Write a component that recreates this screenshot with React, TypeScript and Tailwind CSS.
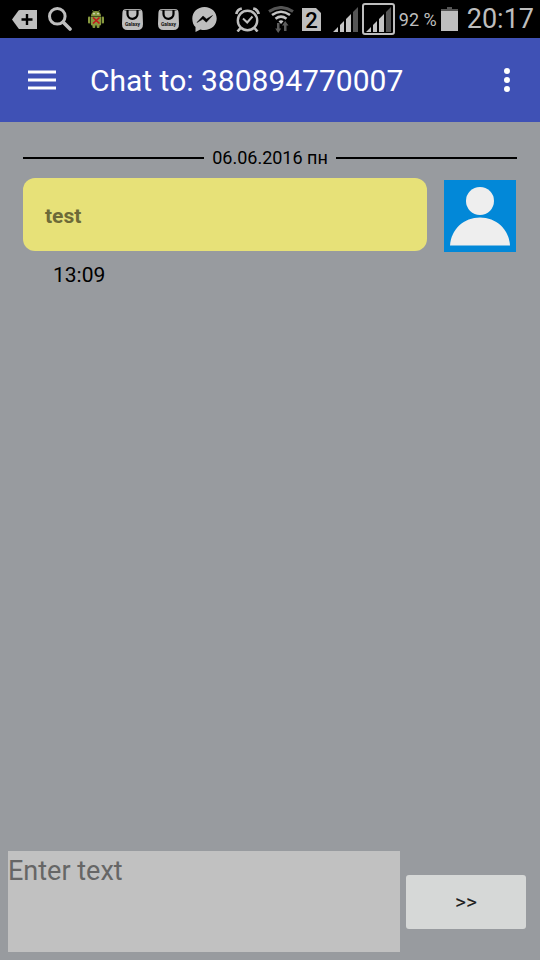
import type { ReactNode } from "react";

const FONT = "font-['Roboto','Noto_Sans',sans-serif]";

function Slot({ children }: { children: ReactNode }) {
  return <span className="flex w-9 shrink-0 justify-center">{children}</span>;
}

function TagPlusIcon() {
  return (
    <svg width="25" height="19" viewBox="0 0 25 19" aria-hidden="true">
      <path d="M0 9.5 6.5 0.5Q7 0 8 0H25V19H8Q7 19 6.5 18.5Z" fill="#bebebe" />
      <path d="M15 4v11M9.500 9.500h11" stroke="#000" strokeWidth="2.4" />
    </svg>
  );
}

function SearchIcon() {
  return (
    <svg width="24" height="24" viewBox="0 0 24 24" fill="none" stroke="#bebebe" aria-hidden="true">
      <circle cx="9.3" cy="9.3" r="7.8" strokeWidth="3" />
      <path d="m15.5 15.5 6.5 6.5" strokeWidth="3.6" strokeLinecap="round" />
    </svg>
  );
}

function DroidIcon() {
  return (
    <svg width="16" height="18" viewBox="0 0 16 18" aria-hidden="true">
      <g fill="#87993f">
        <path d="M3 6a5 5 0 0 1 10 0z" />
        <path d="M2.800 6.500h10.400V14a1.500 1.500 0 0 1-1.500 1.500H4.300A1.500 1.500 0 0 1 2.800 14z" />
        <rect x="0" y="6.500" width="2.200" height="7" rx="1" />
        <rect x="13.800" y="6.500" width="2.200" height="7" rx="1" />
        <rect x="4.500" y="13" width="2.800" height="5" rx="1" />
        <rect x="8.700" y="13" width="2.800" height="5" rx="1" />
      </g>
      <path d="m4.500 0 1 2M11.500 0l-1 2" stroke="#87993f" strokeWidth="0.800" />
      <circle cx="6" cy="3.800" r="0.800" fill="#eee" />
      <circle cx="10" cy="3.800" r="0.800" fill="#eee" />
      <path d="m5 7.500 6.500 6M11.500 7.500 5 13.500" stroke="#c4161c" strokeWidth="1.700" />
    </svg>
  );
}

function GalaxyBagIcon() {
  return (
    <svg width="21" height="21" viewBox="0 0 21 21" aria-hidden="true">
      <path d="M4 0H17Q20.500 0 20.600 4L21 15Q21 21 15.500 21H5.500Q0 21 0 15L0.400 4Q0.500 0 4 0Z" fill="#bebebe" />
      <path d="M2.500 1.300H18.500" stroke="#222" strokeWidth="0.700" />
      <path d="M5.500 1V5a5 4.800 0 0 0 10 0V1" fill="none" stroke="#000" strokeWidth="2.200" />
      <text x="10.500" y="17" textAnchor="middle" fontSize="5" fontWeight="700" fill="#111" fontFamily="Roboto">
        Galaxy
      </text>
    </svg>
  );
}

function MessengerIcon() {
  return (
    <svg width="25" height="25" viewBox="0 0 25 25" aria-hidden="true">
      <path
        d="M12.500 0C5.500 0 .3 5 .3 11.500c0 3.700 1.100 6.500 3.200 8.600V25l4.800-2.500c1.300.4 2.800.5 4.200.5 7 0 12.200-5 12.200-11.500S19.500 0 12.500 0z"
        fill="#bebebe"
      />
      <path d="m5 15.500 6-6.500 3.500 3 6-3.500-6.200 6.700-3.500-3.100z" fill="#000" stroke="#000" strokeWidth="0.500" />
    </svg>
  );
}

function AlarmIcon() {
  return (
    <svg width="25" height="25" viewBox="0 0 25 25" fill="none" stroke="#bebebe" aria-hidden="true">
      <circle cx="12.500" cy="13.500" r="9.700" strokeWidth="2.400" />
      <path d="m8 11.500 4.200 4 5.300-6" strokeWidth="2" />
      <path d="M1.300 7a7 7 0 0 1 5.500-5.500M23.700 7a7 7 0 0 0-5.500-5.500" strokeWidth="2.800" />
      <path d="m5.500 21-3 3.500M19.500 21l3 3.500" strokeWidth="2.600" />
    </svg>
  );
}

function WifiIcon() {
  return (
    <svg width="26" height="27" viewBox="0 0 26 27" fill="none" aria-hidden="true">
      <path d="M1 5.500Q13-2.500 25 5.500" stroke="#555" strokeWidth="3" />
      <path d="M4 9Q13 2.500 22 9M7.500 12.700Q13 8.500 18.500 12.700" stroke="#c4c4c4" strokeWidth="2.600" />
      <path d="M10.500 15.200q2.500-1.800 5 0l-2.500 2.800z" fill="#c4c4c4" />
      <path d="M9 17h2.500v5.500H13.200L10.200 27l-3-4.500H9zM16 25v-5.500h-2l3.200-4.500 3.300 4.500h-2V25z" fill="#5c5c5c" />
    </svg>
  );
}

function SimIcon() {
  return (
    <svg width="19" height="23" viewBox="0 0 19 23" aria-hidden="true">
      <path d="M0 0H14L19 5V23H0Z" fill="#bebebe" />
      <text x="9.500" y="19.500" textAnchor="middle" fontSize="22" fontWeight="500" fill="#000" fontFamily="Roboto">
        2
      </text>
    </svg>
  );
}

function SignalBars() {
  return (
    <svg width="25" height="25" viewBox="0 0 25 25" aria-hidden="true">
      <path d="M0 25 5 20V25ZM7 25V18L11 14V25ZM13 25V12L18 7V25Z" fill="#c4c4c4" />
      <path d="M20 25V5L25 0V25Z" fill="#555" />
    </svg>
  );
}

function BatteryIcon() {
  return (
    <svg width="17" height="24" viewBox="0 0 17 24" aria-hidden="true">
      <path d="M6 0h5v2h6v2.500H0V2h6z" fill="#555" />
      <path d="M0 4h17v20H0z" fill="#bebebe" />
    </svg>
  );
}

function StatusBar() {
  return (
    <div className="flex h-[38px] shrink-0 items-center bg-black px-1.5 text-[#bebebe]">
      <Slot><TagPlusIcon /></Slot>
      <Slot><SearchIcon /></Slot>
      <Slot><DroidIcon /></Slot>
      <Slot><GalaxyBagIcon /></Slot>
      <Slot><GalaxyBagIcon /></Slot>
      <Slot><MessengerIcon /></Slot>
      <div className="ml-auto flex items-center gap-1">
        <div className="mr-2 flex items-center gap-2">
          <AlarmIcon />
          <WifiIcon />
          <SimIcon />
        </div>
        <SignalBars />
        <span className="flex h-8 w-[33px] shrink-0 items-center justify-center rounded-[3px] border-2 border-[#bebebe]">
          <SignalBars />
        </span>
        <span className="pt-0.5 text-[18px] leading-6 whitespace-nowrap">92 %</span>
        <BatteryIcon />
        <span className="ml-[5px] text-[27px] leading-9">20:17</span>
      </div>
    </div>
  );
}

function AppBar() {
  return (
    <header className="flex h-[84px] shrink-0 items-center bg-[#3f51b5] pr-[21px] pl-7 text-white">
      <button type="button" aria-label="Open menu" className="flex h-12 w-7 items-center">
        <svg width="28" height="21" viewBox="0 0 28 21" aria-hidden="true">
          <path d="M0 2h28M0 10h28M0 18h28" stroke="#9fa8da" strokeWidth="4" />
          <path d="M0 2h28M0 10h28M0 18h28" stroke="#fff" strokeWidth="2" />
        </svg>
      </button>
      <h1 className="ml-[34px] flex-1 pt-0.5 text-[30px] leading-10">Chat to: 380894770007</h1>
      <button type="button" aria-label="More options" className="flex h-12 w-6 items-center justify-center">
        <svg width="6" height="24" viewBox="0 0 6 24" fill="#fff" aria-hidden="true">
          <circle cx="3" cy="3" r="3" />
          <circle cx="3" cy="12" r="3" />
          <circle cx="3" cy="21" r="3" />
        </svg>
      </button>
    </header>
  );
}

function Avatar() {
  return (
    <svg className="mt-0.5 shrink-0" width="72" height="72" viewBox="0 0 72 72" role="img" aria-label="Contact">
      <path d="M0 0h72v72H0z" fill="#0288d8" />
      <circle cx="36" cy="21" r="14" fill="#eee" />
      <path d="M6 65.500C7 49 20 37.500 36 37.500S65 49 66 65.500z" fill="#eee" />
    </svg>
  );
}

export default function App() {
  return (
    <div className={`${FONT} flex min-h-screen flex-col bg-[#989b9f]`}>
      <StatusBar />
      <AppBar />
      <main className="flex-1 px-[23px] pt-6">
        <div className="flex items-center gap-2 text-black">
          <span className="h-0.5 flex-1 bg-black" />
          <span className="text-[18px] leading-6">06.06.2016 пн</span>
          <span className="h-0.5 flex-1 bg-black" />
        </div>
        <div className="mt-2 flex items-start gap-[17px] pr-px">
          <p className="flex h-[73px] flex-1 items-center rounded-xl bg-[#e7e178] px-[22px] pt-0.5 text-[21px] leading-7 font-bold text-[#6d6a38]">
            test
          </p>
          <Avatar />
        </div>
        <time className="ml-[30px] block pt-[9px] text-[21px] leading-7 text-black">13:09</time>
      </main>
      <form className="flex shrink-0 items-center gap-1.5 pr-3.5 pb-2 pl-2" onSubmit={(e) => e.preventDefault()}>
        <textarea
          aria-label="Message"
          placeholder="Enter text"
          className="block h-[101px] min-w-0 flex-1 resize-none bg-[#c1c1c1] pt-0.5 text-[27px] leading-9 text-black outline-none placeholder:text-[#666]"
        />
        <button type="submit" className="h-[54px] w-[120px] rounded-[3px] bg-[#d6d8d7] text-[21px] leading-7 text-[#212121]">
          &gt;&gt;
        </button>
      </form>
    </div>
  );
}
